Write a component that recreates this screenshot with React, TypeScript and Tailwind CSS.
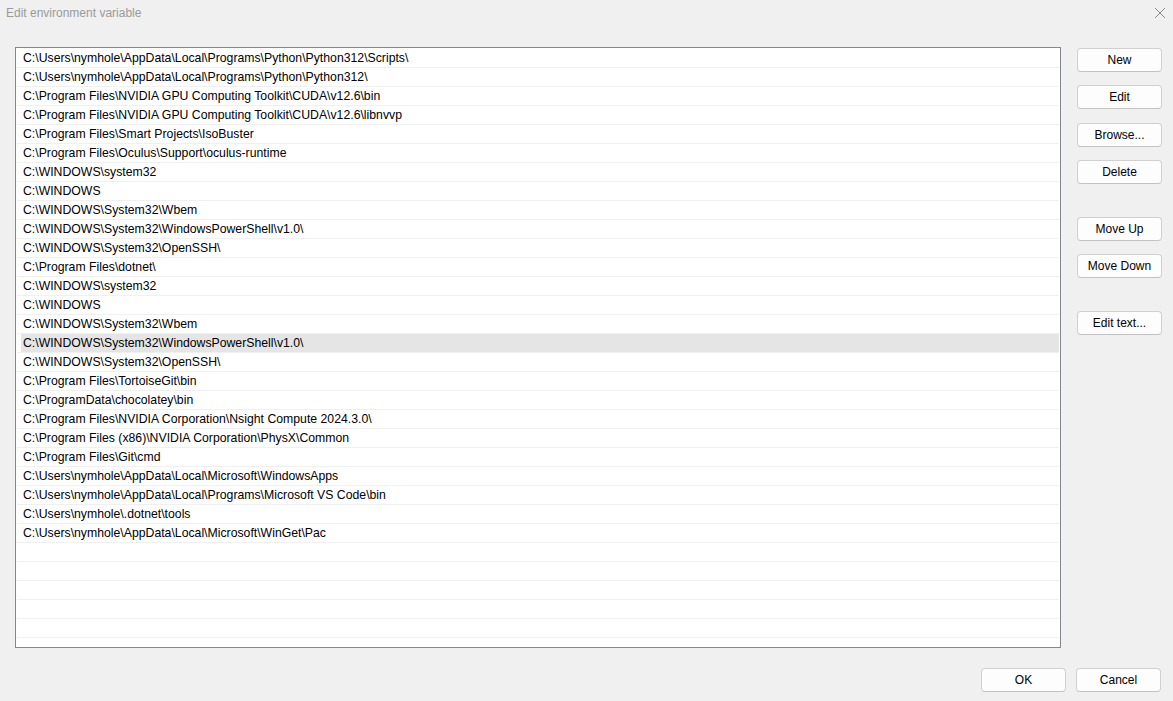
import React from 'react';

const paths = [
  'C:\\Users\\nymhole\\AppData\\Local\\Programs\\Python\\Python312\\Scripts\\',
  'C:\\Users\\nymhole\\AppData\\Local\\Programs\\Python\\Python312\\',
  'C:\\Program Files\\NVIDIA GPU Computing Toolkit\\CUDA\\v12.6\\bin',
  'C:\\Program Files\\NVIDIA GPU Computing Toolkit\\CUDA\\v12.6\\libnvvp',
  'C:\\Program Files\\Smart Projects\\IsoBuster',
  'C:\\Program Files\\Oculus\\Support\\oculus-runtime',
  'C:\\WINDOWS\\system32',
  'C:\\WINDOWS',
  'C:\\WINDOWS\\System32\\Wbem',
  'C:\\WINDOWS\\System32\\WindowsPowerShell\\v1.0\\',
  'C:\\WINDOWS\\System32\\OpenSSH\\',
  'C:\\Program Files\\dotnet\\',
  'C:\\WINDOWS\\system32',
  'C:\\WINDOWS',
  'C:\\WINDOWS\\System32\\Wbem',
  'C:\\WINDOWS\\System32\\WindowsPowerShell\\v1.0\\',
  'C:\\WINDOWS\\System32\\OpenSSH\\',
  'C:\\Program Files\\TortoiseGit\\bin',
  'C:\\ProgramData\\chocolatey\\bin',
  'C:\\Program Files\\NVIDIA Corporation\\Nsight Compute 2024.3.0\\',
  'C:\\Program Files (x86)\\NVIDIA Corporation\\PhysX\\Common',
  'C:\\Program Files\\Git\\cmd',
  'C:\\Users\\nymhole\\AppData\\Local\\Microsoft\\WindowsApps',
  'C:\\Users\\nymhole\\AppData\\Local\\Programs\\Microsoft VS Code\\bin',
  'C:\\Users\\nymhole\\.dotnet\\tools',
  'C:\\Users\\nymhole\\AppData\\Local\\Microsoft\\WinGet\\Pac',
];

const SELECTED = 15;
const EMPTY_ROWS = 6;

function WinButton({ label, className = '' }: { label: string; className?: string }) {
  return (
    <button
      className={`w-[85px] h-[24px] flex items-center justify-center rounded-[4px] border border-[#d0d0d0] border-b-[#c2c2c2] bg-[#fdfdfd] text-[12px] text-black ${className}`}
    >
      {label}
    </button>
  );
}

export default function App() {
  const rows = [...paths, ...Array(EMPTY_ROWS).fill('')];

  return (
    <div
      className="w-[1173px] h-[701px] bg-[#f0f0f0] flex flex-col overflow-hidden"
      style={{ fontFamily: '"Liberation Sans", Arial, sans-serif' }}
    >
      {/* title bar */}
      <div className="h-[26px] flex items-center justify-between pl-[6px] pr-[6px]">
        <span className="text-[12px] text-[#9a9a9a]">Edit environment variable</span>
        <svg width="12" height="12" viewBox="0 0 12 12" className="mr-[1px]">
          <path d="M1 1 L11 11 M11 1 L1 11" stroke="#8a8a8a" strokeWidth="1" />
        </svg>
      </div>

      {/* body */}
      <div className="flex pl-[15px] pt-[21px] gap-[16px]">
        <div className="w-[1046px] h-[601px] border border-[#828790] bg-white pt-[1px] px-[1px] overflow-hidden">
          {rows.map((p, i) => (
            <div key={i} className="h-[19px] border-b border-[#f0f0f0] flex items-center">
              <div
                className={`h-full flex-1 flex items-center pl-[2px] pt-[1px] ml-[4px] text-[12.25px] text-black whitespace-nowrap ${
                  i === SELECTED ? 'bg-[#e5e5e5]' : ''
                }`}
              >
                {p}
              </div>
            </div>
          ))}
        </div>

        <div className="flex flex-col pt-[1px]">
          <WinButton label="New" />
          <WinButton label="Edit" className="mt-[13px]" />
          <WinButton label="Browse..." className="mt-[14px]" />
          <WinButton label="Delete" className="mt-[13px]" />
          <WinButton label="Move Up" className="mt-[33px]" />
          <WinButton label="Move Down" className="mt-[13px]" />
          <WinButton label="Edit text..." className="mt-[33px]" />
        </div>
      </div>

      {/* footer */}
      <div className="flex justify-end gap-[10px] pr-[12px] pt-[20px]">
        <WinButton label="OK" />
        <WinButton label="Cancel" />
      </div>
    </div>
  );
}
